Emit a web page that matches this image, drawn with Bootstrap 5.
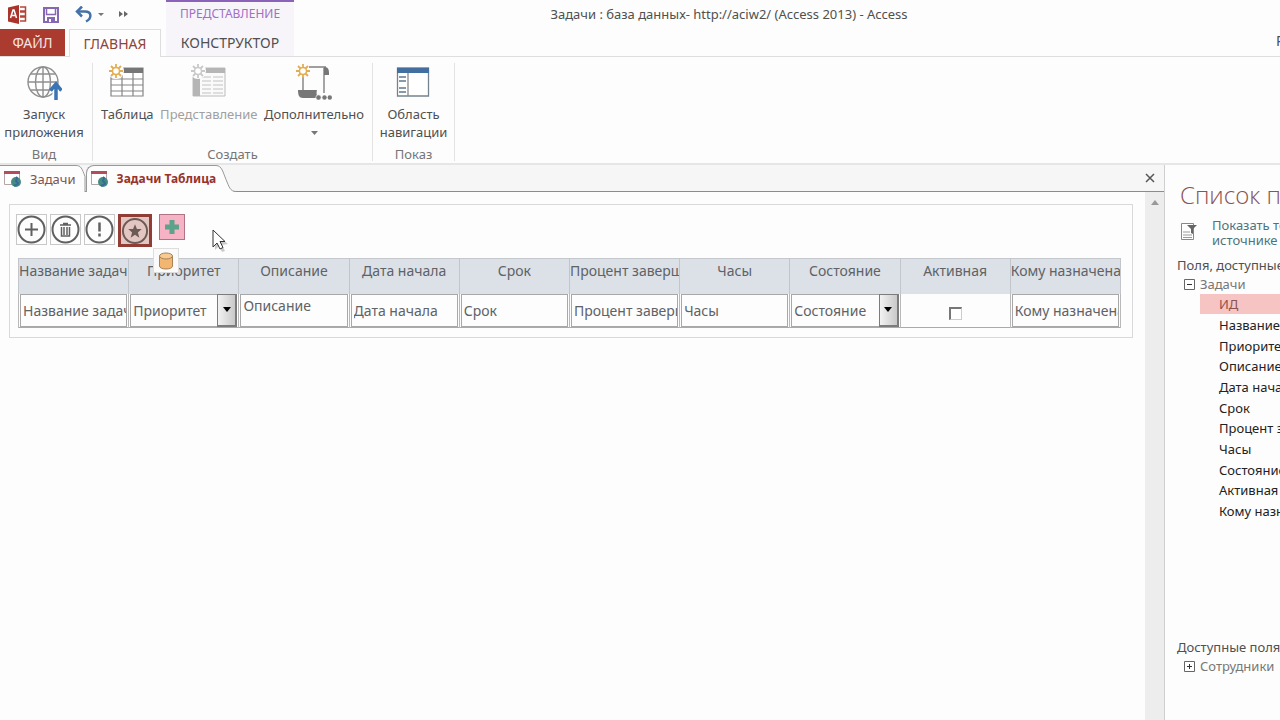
<!DOCTYPE html>
<html lang="ru">
<head>
<meta charset="utf-8">
<meta name="viewport" content="width=device-width, initial-scale=1">
<title>Задачи : база данных - Access</title>
<link href="https://cdn.jsdelivr.net/npm/bootstrap@5.3.0/dist/css/bootstrap.min.css" rel="stylesheet">
<style>
body{font-family:"Noto Sans","Open Sans",sans-serif;font-size:13px;line-height:18px;color:#505050;background:#fdfdfd}
svg{display:block;flex:none}
button{background:none;border:0;padding:0;color:inherit;font:inherit}
.title-row{height:29px}
.tabs-row{height:28px}
.app-title{position:absolute;left:0;right:0;top:0;line-height:28px;padding-left:178px;pointer-events:none}
.context-head{width:128px;border-top:2px solid #8a63b8;background:#f7f5fa;color:#a070c4;margin-left:37px;line-height:24px;font-size:12px}
.quick{width:129px;padding-left:8px}
.file-tab{width:65px;background:#ab3a2f;color:#f7e4e1}
.rib-tab{border:1px solid #dedede;border-bottom:0;width:92px;margin-left:4px;background:#fdfdfd;color:#8b453b;position:relative;z-index:1;height:28px;line-height:26px}
.context-tab{width:128px;background:#f7f5fa;margin-left:5px}
.tabs-row{border-bottom:1px solid #dedede;font-size:14px}
.ribbon{height:108px;border-bottom:2px solid #e6e6e6;padding-top:6px}
.rib-group{border-right:1px solid #e3e3e3;height:98px;display:flex;flex-direction:column;justify-content:space-between;text-align:center}
.rib-btn{display:flex;flex-direction:column;align-items:center;height:76px;white-space:nowrap}
.rib-btn svg{margin-bottom:5px}
.rib-btn svg:first-child{margin-top:1px}
.rib-btn:disabled{color:#a0a0a0}
.group-name{color:#757575;height:16px}
.doc-strip{height:27px;background:#f6f6f6;border-bottom:1px solid #8c8c8c}
.doc-tab{display:flex;height:27px;text-decoration:none;color:#7b5551;white-space:nowrap}
.doc-tab .face{display:flex;align-items:center;background:#fdfdfd;border-top:1px solid #999;height:27px;padding-bottom:1px}
.doc-tab.current{color:#98322b;font-weight:700;font-size:12px}
.doc-tab.current .face{border-left:1px solid #999;border-top-left-radius:8px}
.canvas{border:1px solid #d9d9d9;margin:12px 12px 0 9px;padding:9px 11px 9px 8px}
.act{width:31px;height:31px;border:1px solid #c8c8c8;display:grid;place-items:center;color:#606060}
.act.picked{border:3px solid #913c34;background:#e3c6c1;width:34px;height:33px;color:#6b5a55}
.add-act{width:26px;height:26px;background:#f6b3c5;border:1px solid #b17484;display:grid;place-items:center}
.data-tip{position:absolute;left:135px;top:34px;width:26px;height:25px;background:#fafafa;border:1px solid #ddd;display:grid;place-items:center;z-index:2}
.pointer{position:absolute;left:194px;top:15px}
.grid-view{table-layout:fixed;width:100%;font-size:14px;line-height:20px;color:#606266;border-collapse:collapse;border-top:1px solid #c4c8cd;border-bottom:1px solid #aaa}
.grid-view th{height:35px;background:#dbe1e7;font-weight:400;padding:2px 0 0;vertical-align:top;overflow:hidden;white-space:nowrap;text-align:center;border-right:1px solid #c2c5ca;border-left:1px solid #c2c5ca}
.grid-view th.long{text-align:left}
.grid-view td{height:34px;padding:0 1px 0 1px;border-left:1px solid #b9b9b9;border-right:1px solid #b9b9b9;overflow:hidden}
.box{border:1px solid #a8a8a8;border-radius:0;background:#fdfdfd;width:100%;height:33px;padding:1px 0 0 2px;font-size:14px;line-height:20px;color:#606266;display:block;appearance:none;resize:none;overflow:hidden;outline:0}
.drop{position:absolute;right:0;top:0;width:20px;height:33px;border:1px solid #7c7c7c;border-width:1px 2px 2px 1px;background:linear-gradient(90deg,#f2f2f2,#c9c9c9);display:grid;place-items:center;pointer-events:none}
.tick{appearance:none;width:13px;height:13px;border:1px solid #ccc;border-top:2px solid #777;border-left:2px solid #777;display:block;margin:6px auto 0;background:#fff}
.scroll-rail{width:19px;background:#ededed;padding-top:8px}
.field-pane{width:116px;border-left:1px solid #cfcfcf;padding-left:12px;overflow:hidden;white-space:nowrap}
.pane-title{font-size:24px;line-height:34px;font-weight:300;font-family:"Open Sans","Noto Sans",sans-serif;color:#8b5351;margin:13px 0 0 3px}
.pane-link{color:#4c7480;text-decoration:none;line-height:15px}
.fields{color:#222;margin:1px 0 0 23px;padding:0;list-style:none}
.fields li{height:21px;line-height:20px;padding-left:19px}
.fields li:nth-child(3n){height:20px}
.fields .chosen{background:#f6c4c2;color:#8b5351;height:20px;margin-bottom:1px}
.node{color:#777;padding-left:7px;gap:5px;margin-top:1px}
</style>
</head>
<body class="vh-100 d-flex flex-column overflow-hidden">
<header class="position-relative overflow-hidden flex-shrink-0">
  <div class="title-row d-flex">
    <div class="quick d-flex align-items-center">
      <svg width="19" height="19" viewBox="0 0 19 19"><path d="M0 2.5 11 0v19L0 16.500z" fill="#a8342b"/><path d="M12 2h5.500v4H12m0 1h5.500v4H12m0 1h5.500v4H12" fill="none" stroke="#b5443a" stroke-width="1.500"/><path d="m2.500 13 2.500-8h1l2.500 8M3.500 10.500h4" fill="none" stroke="#fff" stroke-width="1.500"/></svg>
      <svg class="ms-3" width="16" height="16" viewBox="0 0 16 16"><path d="M1 1h14v14H1z" fill="#fff" stroke="#8567b3" stroke-width="2"/><path d="M3.500 1.500v6h9v-6" fill="none" stroke="#8567b3" stroke-width="1.500"/><path d="M4 10h8v5H4z" fill="#8567b3"/><path d="M6 12h2v3H6z" fill="#fff"/></svg>
      <svg class="ms-3" width="18" height="17" viewBox="0 0 18 17"><path d="M2 5.500h8c7 0 7 7 1 10" fill="none" stroke="#4472a8" stroke-width="2.500"/><path d="M7 .5 2 5.500l5 5" fill="none" stroke="#4472a8" stroke-width="2.500"/></svg>
      <svg class="ms-1" width="8" height="6" viewBox="0 0 8 6"><path d="M1 1h6L4 4z" fill="#777"/></svg>
      <svg style="margin-left:14px" width="9" height="7" viewBox="0 0 9 7"><path d="m0 0 4 3-4 3zm5 0 4 3-4 3z" fill="#666"/></svg>
    </div>
    <div class="context-head text-center">ПРЕДСТАВЛЕНИЕ</div>
    <div class="app-title text-center">Задачи : база данных- http://aciw2/ (Access 2013) - Access</div>
  </div>
  <nav class="tabs-row d-flex">
    <button class="file-tab">ФАЙЛ</button>
    <button class="rib-tab">ГЛАВНАЯ</button>
    <button class="context-tab">КОНСТРУКТОР</button>
    <span class="ms-auto overflow-hidden" style="width:4px;line-height:24px">Р</span>
  </nav>
</header>

<section class="ribbon d-flex flex-shrink-0">
  <div class="rib-group" style="width:93px">
    <button class="rib-btn me-1">
      <svg width="36" height="36" viewBox="0 0 36 36"><g fill="none" stroke="#8e8e8e" stroke-width="1.400"><circle cx="17" cy="18" r="15"/><ellipse cx="17" cy="18" rx="7.500" ry="15"/><path d="M17 3v30M2 18h30M5 10h24M5 26h24"/></g><path d="M30 36V23" stroke="#fdfdfd" stroke-width="7"/><path d="M30 36V21M24.500 26.500 30 20l5.500 6.500" fill="none" stroke="#3b74b4" stroke-width="3.500"/></svg>
      <span>Запуск<br>приложения</span></button>
    <div class="group-name me-1">Вид</div>
  </div>
  <div class="rib-group" style="width:280px">
    <div class="d-flex justify-content-between px-2">
      <button class="rib-btn">
        <svg width="36" height="36" viewBox="0 0 36 36"><path d="M2 4h32v28H2z" fill="#fff" stroke="#858585" stroke-width="1.200"/><path d="M2 4h32v5H2z" fill="#767676"/><path d="M2 15h32M2 21h32M2 27h32M13 9v23M24 9v23" stroke="#858585" stroke-width="1.200"/><circle cx="7" cy="7" r="8" fill="#fdfdfd"/><path d="M7 0v4M7 10v4M0 7h4M10 7h4M2 2l3 3M9 9l3 3M12 2 9 5M5 9l-3 3" stroke="#e3ad52" stroke-width="1.800"/><circle cx="7" cy="7" r="3.500" fill="#fff" stroke="#e3ad52" stroke-width="1.500"/></svg>
        <span>Таблица</span></button>
      <button class="rib-btn" disabled>
        <svg width="36" height="36" viewBox="0 0 36 36"><path d="M2 4h32v28H2z" fill="#fafafa" stroke="#bcbcbc"/><path d="M2 4h32v5H2zM2 9h7v23H2z" fill="#b5b5b5"/><path d="M11 13h9m2 0h10M11 17h9m2 0h10M11 21h9m2 0h10M11 25h9m2 0h10M11 29h9m2 0h10" stroke="#c2c2c2"/><circle cx="7" cy="7" r="8" fill="#fdfdfd"/><path d="M7 0v4M7 10v4M0 7h4M10 7h4M2 2l3 3M9 9l3 3M12 2 9 5M5 9l-3 3" stroke="#c9c9c9" stroke-width="1.800"/><circle cx="7" cy="7" r="3.500" fill="#fff" stroke="#c9c9c9" stroke-width="1.500"/></svg>
        <span>Представление</span></button>
      <button class="rib-btn">
        <svg width="36" height="36" viewBox="0 0 36 36"><path d="M7 13v14M13 3h17M28 4v25" fill="none" stroke="#808080" stroke-width="1.400"/><path d="M28 3c5 0 5 3 5 8h-5z" fill="#777"/><path d="M2 26h19c-1 4 0 5 1 8H7c-4 0-5-3-5-8z" fill="#777"/><g fill="#777"><circle cx="22.500" cy="33.500" r="2.700" stroke="#fff" stroke-width=".7"/><circle cx="28.500" cy="33.500" r="2.200"/><circle cx="33.800" cy="33.500" r="2.200"/></g><path d="M7 0v4M7 10v4M0 7h4M10 7h4M2 2l3 3M9 9l3 3M12 2 9 5M5 9l-3 3" stroke="#e3ad52" stroke-width="1.800"/><circle cx="7" cy="7" r="3.500" fill="#fff" stroke="#e3ad52" stroke-width="1.500"/></svg>
        <span>Дополнительно</span>
        <svg class="mt-2" width="7" height="4" viewBox="0 0 7 4"><path d="M0 0h7L3.500 4z" fill="#777"/></svg></button>
    </div>
    <div class="group-name">Создать</div>
  </div>
  <div class="rib-group" style="width:82px">
    <button class="rib-btn">
      <svg width="36" height="36" viewBox="0 0 36 36"><path d="M1.500 4h31v28h-31z" fill="#fff" stroke="#76828d" stroke-width="1.300"/><path d="M1 4h32v5H1z" fill="#426f9f"/><path d="M12 9v23" stroke="#888" stroke-width="1.300"/><path d="M3 13h7M3 17h7M3 24h7M3 28h7" stroke="#5d7891" stroke-width="1.300"/></svg>
      <span>Область<br>навигации</span></button>
    <div class="group-name">Показ</div>
  </div>
</section>

<main class="d-flex flex-grow-1">
  <section class="d-flex flex-column flex-grow-1">
    <nav class="doc-strip d-flex">
      <a class="doc-tab" href="#"><span class="face ps-1">
        <svg width="18" height="18" viewBox="0 0 18 18"><path d="M.5 1.500h15v13H.5z" fill="#fff" stroke="#b5a5a5"/><path d="M0 1h16v3H0z" fill="#b34d59"/><circle cx="12" cy="12" r="5" fill="#468b83"/><path d="M12 7c3 2-2 3 1 5s-2 3-3 4" fill="none" stroke="#376a9a" stroke-width="2"/></svg>
        <span class="ps-2">Задачи</span></span>
        <svg width="10" height="27" viewBox="0 0 10 27"><path d="M0 .5c5 0 7 3 9 8v19H0z" fill="#fdfdfd"/><path d="M0 .5c5 0 6 3 9 11V27" fill="none" stroke="#999"/></svg></a>
      <a class="doc-tab current" href="#"><span class="face ps-1">
        <svg width="18" height="18" viewBox="0 0 18 18"><path d="M.5 1.500h15v13H.5z" fill="#fff" stroke="#b5a5a5"/><path d="M0 1h16v3H0z" fill="#b34d59"/><circle cx="12" cy="12" r="5" fill="#468b83"/><path d="M12 7c3 2-2 3 1 5s-2 3-3 4" fill="none" stroke="#376a9a" stroke-width="2"/></svg>
        <span class="ps-2">Задачи Таблица</span></span>
        <svg width="20" height="27" viewBox="0 0 20 27"><path d="M0 .5c10 0 8 25 20 26.500H0z" fill="#fdfdfd"/><path d="M0 .5c6 0 7 7 10 14s4 12 10 12" fill="none" stroke="#999"/></svg></a>
      <button class="ms-auto px-2" aria-label="Закрыть" style="margin-right:1px"><svg width="10" height="10" viewBox="0 0 10 10"><path d="m1 1 8 8M9 1 1 9" stroke="#555" stroke-width="1.500"/></svg></button>
    </nav>
    <div class="d-flex flex-grow-1">
      <div class="flex-grow-1">
        <div class="canvas">
          <div class="position-relative d-flex align-items-start" style="height:44px;gap:3px">
            <button class="act" style="margin-left:-2px" aria-label="Добавить"><svg width="29" height="29" viewBox="0 0 29 29" fill="none" stroke="currentColor" stroke-width="2"><circle cx="14.500" cy="14.500" r="13"/><path d="M14.500 8v13M8 14.500h13"/></svg></button>
            <button class="act" aria-label="Удалить"><svg width="29" height="29" viewBox="0 0 29 29" fill="none" stroke="currentColor" stroke-width="2"><circle cx="14.500" cy="14.500" r="13"/><path d="M9 10h11M12 8.500h5" stroke-width="1.500"/><path d="M10.500 12v9h8v-9M13 12v8M16 12v8" stroke-width="1.500"/></svg></button>
            <button class="act" aria-label="Важно"><svg width="29" height="29" viewBox="0 0 29 29" fill="none" stroke="currentColor" stroke-width="2"><circle cx="14.500" cy="14.500" r="13"/><path d="M14.500 7.500v9m0 2v3" stroke-width="2.500"/></svg></button>
            <button class="act picked" aria-label="Избранное"><svg width="28" height="28" viewBox="0 0 29 29" fill="none" stroke="currentColor" stroke-width="2"><circle cx="14.500" cy="14.500" r="12.500"/><path d="m14.500 7.500 2 5h5l-4 3.500 1.500 5.500-4.500-3-4.500 3 1.500-5.500-4-3.500h5z" fill="currentColor" stroke="none"/></svg></button>
            <button class="add-act ms-1" aria-label="Новое действие"><svg width="14" height="14" viewBox="0 0 14 14"><path d="M7 0v14M0 7h14" stroke="#5da28b" stroke-width="5"/></svg></button>
            <button class="data-tip" aria-label="Данные"><svg width="16" height="18" viewBox="0 0 16 18"><path d="M1.500 4v10c0 4 13 4 13 0V4" fill="#f3b671" stroke="#a68256"/><ellipse cx="8" cy="4" rx="6.500" ry="3" fill="#f8ca91" stroke="#a68256"/></svg></button>
            <svg class="pointer" width="18" height="24" viewBox="0 0 18 24"><path d="m2 3 1 18 4-4 3 6 3-1-3-6 6-1z" fill="#aaa" opacity=".6"/><path d="M1 1v17l4-4 3 6 3-1.500-3-6h5z" fill="#fff" stroke="#333"/></svg>
          </div>
          <table class="grid-view">
            <thead><tr><th class="long">Название задачи</th><th>Приоритет</th><th>Описание</th><th>Дата начала</th><th>Срок</th><th class="long">Процент завершения</th><th>Часы</th><th>Состояние</th><th>Активная</th><th class="long">Кому назначена</th></tr></thead>
            <tbody><tr>
              <td><input class="box" aria-label="Название задачи" value="Название задачи"></td>
              <td><div class="position-relative"><select class="box" aria-label="Приоритет"><option>Приоритет</option></select><span class="drop"><svg width="8" height="5" viewBox="0 0 8 5"><path d="M0 0h8L4 5z"/></svg></span></div></td>
              <td><textarea class="box" aria-label="Описание">Описание</textarea></td>
              <td><input class="box" aria-label="Дата начала" value="Дата начала"></td>
              <td><input class="box" aria-label="Срок" value="Срок"></td>
              <td><input class="box" aria-label="Процент завершения" value="Процент завершения"></td>
              <td><input class="box" aria-label="Часы" value="Часы"></td>
              <td><div class="position-relative"><select class="box" aria-label="Состояние"><option>Состояние</option></select><span class="drop"><svg width="8" height="5" viewBox="0 0 8 5"><path d="M0 0h8L4 5z"/></svg></span></div></td>
              <td><input class="tick" type="checkbox" aria-label="Активная"></td>
              <td><input class="box" aria-label="Кому назначена" value="Кому назначена"></td>
            </tr></tbody>
          </table>
        </div>
      </div>
      <div class="scroll-rail d-flex flex-shrink-0 justify-content-center"><svg width="8" height="5" viewBox="0 0 8 5"><path d="M0 5h8L4 0z" fill="#999"/></svg></div>
    </div>
  </section>
  <aside class="field-pane d-flex flex-column flex-shrink-0">
    <h1 class="pane-title">Список полей</h1>
    <a class="pane-link d-flex mt-1" style="margin-left:3px" href="#">
      <svg style="margin-top:6px" width="18" height="19" viewBox="0 0 18 19"><path d="M1.500 1.500h12v16h-12z" fill="#fff" stroke="#888"/><path d="M3 10h7M3 13h9M3 15.500h9" stroke="#999"/><path d="M7 3h10l-4 4v5l-2-1V7z" fill="#666"/></svg>
      <span style="padding-left:14px;padding-top:2px">Показать только поля в<br>источнике записей</span></a>
    <div class="mt-2">Поля, доступные для этого</div>
    <div class="node d-flex align-items-center"><svg width="11" height="11" viewBox="0 0 11 11"><path d="M.5.5h10v10H.5z" fill="#fff" stroke="#666"/><path d="M3 5.500h5" stroke="#333"/></svg>Задачи</div>
    <ul class="fields">
      <li class="chosen">ИД</li><li>Название задачи</li><li>Приоритет</li><li>Описание</li><li>Дата начала</li><li>Срок</li><li>Процент завершения</li><li>Часы</li><li>Состояние</li><li>Активная</li><li>Кому назначена</li>
    </ul>
    <div class="mt-auto" style="padding-bottom:45px">
      <div>Доступные поля в связанных</div>
      <div class="node d-flex align-items-center"><svg width="11" height="11" viewBox="0 0 11 11"><path d="M.5.5h10v10H.5z" fill="#fff" stroke="#666"/><path d="M3 5.500h5M5.500 3v5" stroke="#333"/></svg>Сотрудники</div>
    </div>
  </aside>
</main>
<script src="https://cdn.jsdelivr.net/npm/bootstrap@5.3.0/dist/js/bootstrap.bundle.min.js"></script>
</body>
</html>
